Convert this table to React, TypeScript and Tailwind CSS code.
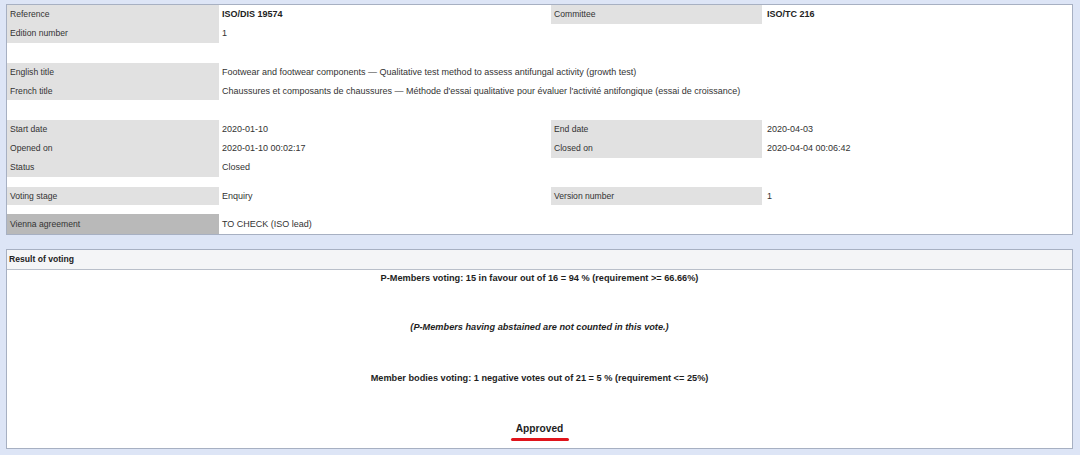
import React from 'react';

type Cell = { label?: string; value?: string; bold?: boolean; dark?: boolean };

const rows: { h: string; left?: Cell; right?: Cell; wide?: boolean }[] = [
  { h: 'h-[19px]', left: { label: 'Reference', value: 'ISO/DIS 19574', bold: true }, right: { label: 'Committee', value: 'ISO/TC 216', bold: true } },
  { h: 'h-[19px]', left: { label: 'Edition number', value: '1' } },
  { h: 'h-[20px]' },
  { h: 'h-[19px]', wide: true, left: { label: 'English title', value: 'Footwear and footwear components — Qualitative test method to assess antifungal activity (growth test)' } },
  { h: 'h-[18px]', wide: true, left: { label: 'French title', value: "Chaussures et composants de chaussures — Méthode d'essai qualitative pour évaluer l'activité antifongique (essai de croissance)" } },
  { h: 'h-[20px]' },
  { h: 'h-[19px]', left: { label: 'Start date', value: '2020-01-10' }, right: { label: 'End date', value: '2020-04-03' } },
  { h: 'h-[19px]', left: { label: 'Opened on', value: '2020-01-10 00:02:17' }, right: { label: 'Closed on', value: '2020-04-04 00:06:42' } },
  { h: 'h-[19px]', left: { label: 'Status', value: 'Closed' } },
  { h: 'h-[10px]' },
  { h: 'h-[18px]', left: { label: 'Voting stage', value: 'Enquiry' }, right: { label: 'Version number', value: '1' } },
  { h: 'h-[9px]' },
  { h: 'h-[20px]', left: { label: 'Vienna agreement', value: 'TO CHECK (ISO lead)', dark: true } },
];

function Label({ c }: { c?: Cell }) {
  if (!c) return <div />;
  return (
    <div className={`flex items-center pl-[3px] ${c.dark ? 'bg-[#b9b9b9]' : 'bg-[#e1e1e1]'}`}>
      {c.label}
    </div>
  );
}

function Value({ c, span }: { c?: Cell; span?: boolean }) {
  if (!c) return <div />;
  return (
    <div className={`flex items-center pl-[3px] whitespace-nowrap text-[9px] ${c.bold ? 'font-bold text-[#222]' : ''} ${span ? 'col-span-3' : ''}`}>
      {c.value}
    </div>
  );
}

export default function App() {
  return (
    <div className="w-[1080px] h-[455px] bg-[#dde5f6] pt-[4px] pl-[6px] text-[8.6px] leading-none text-[#333] font-['Liberation_Sans',Arial,sans-serif]">
      <div className="w-[1067px] border border-[#a7b0c2] bg-white">
        {rows.map((r, i) => (
          <div key={i} className={`grid grid-cols-[212px_332px_211px_1fr] ${r.h}`}>
            {r.left ? (
              <>
                <Label c={r.left} />
                <Value c={r.left} span={r.wide} />
                {!r.wide && (
                  <>
                    <Label c={r.right} />
                    {r.right ? (
                      <div className={`flex items-center pl-[5px] text-[9px] ${r.right.bold ? 'font-bold text-[#222]' : ''}`}>{r.right.value}</div>
                    ) : (
                      <div />
                    )}
                  </>
                )}
              </>
            ) : null}
          </div>
        ))}
      </div>

      <div className="mt-[14px] w-[1067px] h-[200px] border border-[#a7b0c2] bg-white flex flex-col">
        <div className="h-[20px] flex items-center pl-[2px] bg-[#f4f5f7] border-b border-[#b9bfca] font-bold text-[#222]">
          Result of voting
        </div>
        <div className="flex flex-col items-center pt-[3px] font-bold text-[#1e1e1e] text-[9.2px]">
          <div className="h-[12px] flex items-center">P-Members voting: 15 in favour out of 16 = 94 % (requirement &gt;= 66.66%)</div>
          <div className="h-[12px] mt-[37px] flex items-center italic">(P-Members having abstained are not counted in this vote.)</div>
          <div className="h-[12px] mt-[39px] flex items-center">Member bodies voting: 1 negative votes out of 21 = 5 % (requirement &lt;= 25%)</div>
          <div className="h-[14px] mt-[37px] flex items-center text-[10.2px]">Approved</div>
          <div className="mt-[2px] w-[58px] h-[3px] rounded-full bg-[#e0141b]" />
        </div>
      </div>
    </div>
  );
}
